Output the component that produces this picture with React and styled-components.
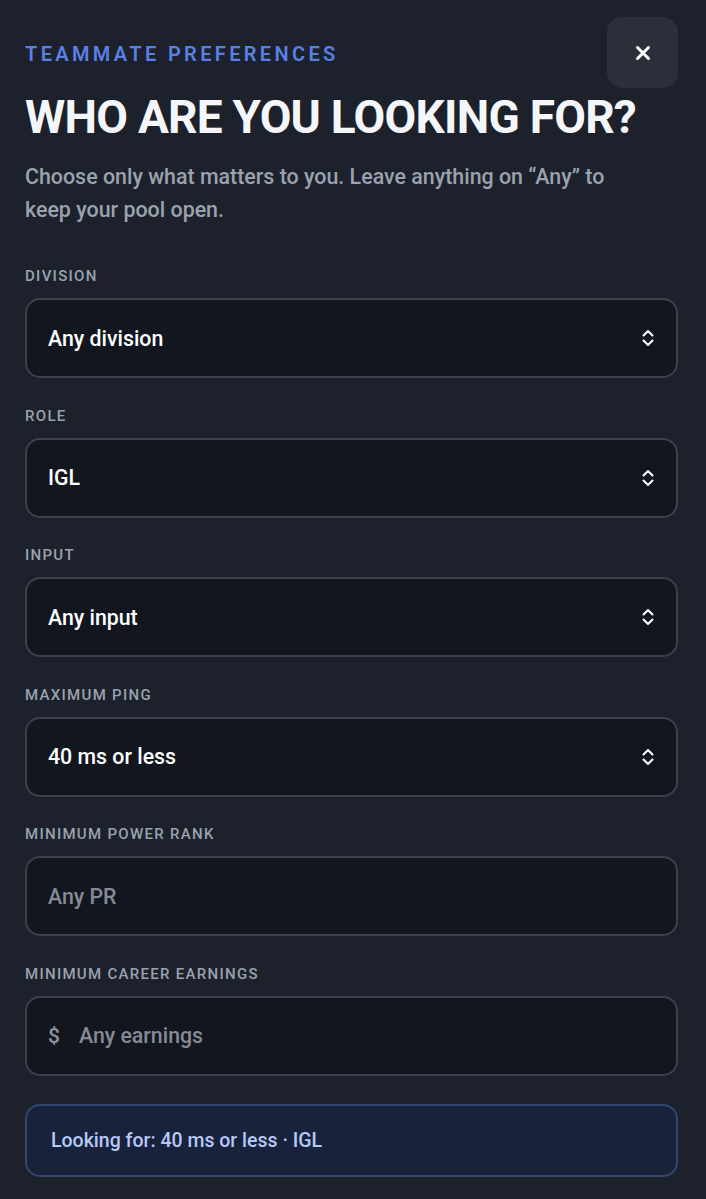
import React, { useState } from "react";
import styled, { createGlobalStyle } from "styled-components";

const GlobalStyle = createGlobalStyle`
  * {
    box-sizing: border-box;
  }

  body {
    margin: 0;
    background: #1c212b;
    font-family: Roboto, "Liberation Sans", sans-serif;
    -webkit-font-smoothing: antialiased;
  }
`;

const Page = styled.div`
  min-height: 100vh;
  padding: 17px 28px 20px 25px;
  background: #1c212b;
`;

const Header = styled.div`
  display: flex;
  align-items: center;
  justify-content: space-between;
`;

const Eyebrow = styled.div`
  padding-top: 3px;
  font-size: 20px;
  font-weight: 600;
  letter-spacing: 3.35px;
  color: #5a80e4;
  text-transform: uppercase;
`;

const CloseBtn = styled.button`
  display: flex;
  align-items: center;
  justify-content: center;
  width: 71px;
  height: 71px;
  border: none;
  border-radius: 15px;
  background: #2a2f3a;
  color: #ffffff;
  cursor: pointer;
`;

const Title = styled.h1`
  margin: 1px 0 0;
  font-size: 46px;
  line-height: 56px;
  font-weight: 700;
  letter-spacing: -0.75px;
  color: #f5f6f9;
  white-space: nowrap;
`;

const Subtitle = styled.p`
  margin: 15px 0 0;
  font-size: 21.4px;
  line-height: 33px;
  font-weight: 500;
  color: #9ba2af;
  max-width: 615px;
`;

const Form = styled.div`
  display: flex;
  flex-direction: column;
  gap: 28.5px;
  margin-top: 41px;
`;

const Field = styled.div`
  display: flex;
  flex-direction: column;
  gap: 13px;
`;

const Label = styled.div`
  font-size: 15px;
  line-height: 18px;
  font-weight: 500;
  letter-spacing: 1.3px;
  color: #9aa2af;
  text-transform: uppercase;
`;

const Box = styled.div`
  display: flex;
  align-items: center;
  gap: 19px;
  height: 80px;
  padding: 0 21px;
  border: 2px solid #3b414d;
  border-radius: 15px;
  background: #12161e;
  cursor: ${(p) => (p.$select ? "pointer" : "text")};
`;

const Value = styled.span`
  flex: 1;
  font-size: 21.3px;
  font-weight: 500;
  color: #ffffff;
`;

const Input = styled.input`
  flex: 1;
  min-width: 0;
  border: none;
  outline: none;
  background: transparent;
  font-family: inherit;
  font-size: 21.3px;
  font-weight: 500;
  color: #ffffff;
  padding: 0;

  &::placeholder {
    color: #858b96;
  }
`;

const Prefix = styled.span`
  font-size: 21px;
  font-weight: 500;
  color: #8d95a3;
`;

const Summary = styled.div`
  display: flex;
  align-items: center;
  height: 73px;
  margin-top: 28px;
  padding: 0 24px;
  border: 2px solid #33466b;
  border-radius: 15px;
  background: #18223a;
  font-size: 19.5px;
  font-weight: 500;
  color: #b7c8f6;
`;

const UpDown = () => (
  <svg width="14" height="18" viewBox="0 0 14 18" fill="none">
    <path
      d="M2.5 6.5 L7 2 L11.5 6.5"
      stroke="#ffffff"
      strokeWidth="2"
      strokeLinecap="round"
      strokeLinejoin="round"
    />
    <path
      d="M2.5 11.5 L7 16 L11.5 11.5"
      stroke="#ffffff"
      strokeWidth="2"
      strokeLinecap="round"
      strokeLinejoin="round"
    />
  </svg>
);

const CloseIcon = () => (
  <svg width="16" height="16" viewBox="0 0 16 16" fill="none">
    <path
      d="M2.5 2.5 L13.5 13.5 M13.5 2.5 L2.5 13.5"
      stroke="#ffffff"
      strokeWidth="3"
      strokeLinecap="round"
    />
  </svg>
);

function SelectField({ label, value }) {
  return (
    <Field>
      <Label>{label}</Label>
      <Box $select>
        <Value>{value}</Value>
        <UpDown />
      </Box>
    </Field>
  );
}

export default function App() {
  const [pr, setPr] = useState("");
  const [earnings, setEarnings] = useState("");

  return (
    <>
      <GlobalStyle />
      <Page>
        <Header>
          <Eyebrow>Teammate preferences</Eyebrow>
          <CloseBtn aria-label="Close">
            <CloseIcon />
          </CloseBtn>
        </Header>
        <Title>WHO ARE YOU LOOKING FOR?</Title>
        <Subtitle>
          Choose only what matters to you. Leave anything on “Any” to keep your
          pool open.
        </Subtitle>

        <Form>
          <SelectField label="Division" value="Any division" />
          <SelectField label="Role" value="IGL" />
          <SelectField label="Input" value="Any input" />
          <SelectField label="Maximum ping" value="40 ms or less" />
          <Field>
            <Label>Minimum power rank</Label>
            <Box>
              <Input
                placeholder="Any PR"
                value={pr}
                onChange={(e) => setPr(e.target.value.replace(/\D/g, ""))}
              />
            </Box>
          </Field>
          <Field>
            <Label>Minimum career earnings</Label>
            <Box>
              <Prefix>$</Prefix>
              <Input
                placeholder="Any earnings"
                value={earnings}
                onChange={(e) => setEarnings(e.target.value.replace(/\D/g, ""))}
              />
            </Box>
          </Field>
        </Form>

        <Summary>Looking for: 40 ms or less · IGL</Summary>
      </Page>
    </>
  );
}
